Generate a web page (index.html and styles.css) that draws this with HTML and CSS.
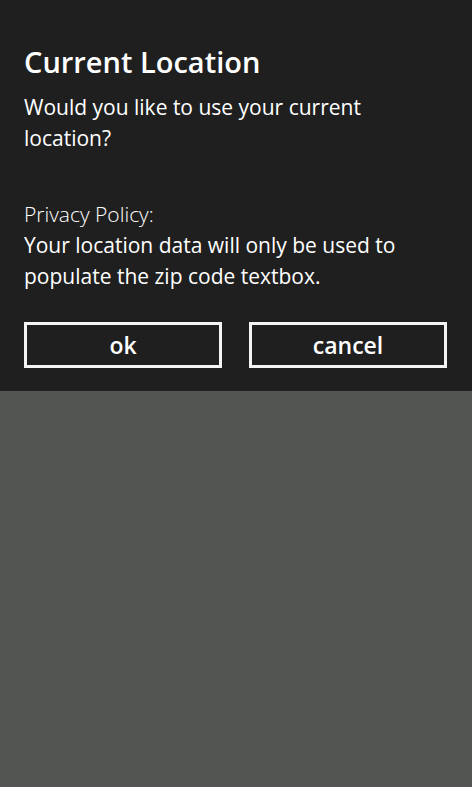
FILE: index.html
```html
<!DOCTYPE html>
<html lang="en">
<head>
<meta charset="utf-8">
<title>Current Location</title>
<link rel="stylesheet" href="styles.css">
</head>
<body>
<div class="screen">
  <section class="dialog">
    <h1 class="title">Current Location</h1>
    <p class="message">Would you like to use your current location?</p>
    <p class="policy"><span class="policy-label">Privacy Policy:</span><br>Your location data will only be used to populate the zip code textbox.</p>
    <div class="actions">
      <button class="btn">ok</button>
      <button class="btn">cancel</button>
    </div>
  </section>
  <div class="backdrop"></div>
</div>
</body>
</html>
```
FILE: styles.css
```css
html, body {
  margin: 0;
  padding: 0;
  height: 100%;
}
body {
  background: #535553;
  font-family: "Open Sans", "Noto Sans", sans-serif;
  color: #ffffff;
}
.screen {
  display: flex;
  flex-direction: column;
  height: 100%;
}
.dialog {
  background: #1f1f1f;
  height: 391px;
  box-sizing: border-box;
  padding: 40px 24px 0 24px;
  display: flex;
  flex-direction: column;
}
.title {
  margin: 0;
  font-size: 29px;
  font-weight: 600;
  line-height: 44px;
}
.message {
  margin: 8px 0 0 0;
  font-size: 21px;
  line-height: 31px;
  width: 380px;
}
.policy {
  margin: 45px 0 0 0;
  font-size: 21px;
  line-height: 31px;
}
.policy-label {
  font-weight: 300;
}
.actions {
  display: flex;
  gap: 27px;
  margin-top: 30px;
}
.btn {
  flex: 0 0 198px;
  height: 46px;
  box-sizing: border-box;
  border: 3px solid #f4f4f4;
  background: transparent;
  color: #ffffff;
  font-family: "Open Sans", "Noto Sans", sans-serif;
  font-size: 23px;
  font-weight: 600;
  padding: 0;
  line-height: 38px;
}
.backdrop {
  flex: 1;
}
```
